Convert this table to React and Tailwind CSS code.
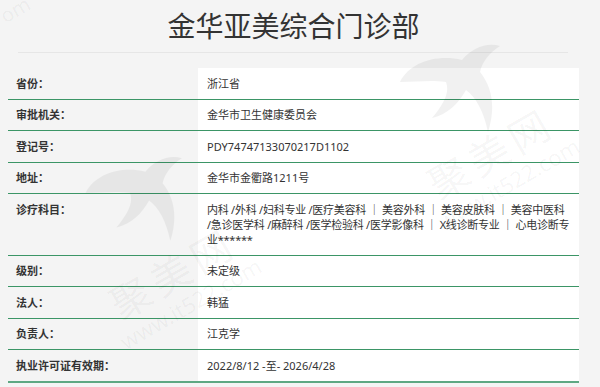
import React from 'react';

const FONT = "font-['Noto_Sans','Noto_Sans_CJK_SC',sans-serif]";

const rows = [
  { label: '省份：', value: ['浙江省'] },
  { label: '审批机关：', value: ['金华市卫生健康委员会'] },
  { label: '登记号：', value: ['PDY74747133070217D1102'] },
  { label: '地址：', value: ['金华市金衢路1211号'] },
  {
    label: '诊疗科目：',
    tight: true,
    value: [
      '内科 /外科 /妇科专业 /医疗美容科 ｜ 美容外科 ｜ 美容皮肤科 ｜ 美容中医科',
      '/急诊医学科 /麻醉科 /医学检验科 /医学影像科 ｜ X线诊断专业 ｜ 心电诊断专',
      '业******',
    ],
  },
  { label: '级别：', value: ['未定级'] },
  { label: '法人：', value: ['韩猛'] },
  { label: '负责人：', value: ['江克学'] },
  { label: '执业许可证有效期：', value: ['2022/8/12 -至- 2026/4/28'] },
];

const Tooth = ({ className }) => (
  <svg viewBox="0 0 130 95" className={className} fill="#000">
    <path d="M8 40 C18 20 45 12 70 18 C80 6 95 0 108 4 C98 10 90 20 88 30 C100 45 104 65 96 90 C92 70 84 55 74 48 C66 62 56 72 40 76 C52 62 58 50 54 40 C40 38 22 40 8 40 Z" />
  </svg>
);

const Watermark = ({ className }) => (
  <div className={`absolute flex flex-col items-center -rotate-[30deg] text-black/[0.045] pointer-events-none ${className}`}>
    <span className="text-[40px] leading-[44px] tracking-[6px]">聚美网</span>
    <span className="text-[22px] leading-[24px]">www.it522.com</span>
  </div>
);

export default function App() {
  return (
    <div className={`relative w-full h-[387px] overflow-hidden bg-[#f4f4f4] text-[#333] ${FONT}`}>
      <div className="pl-[8px] pr-[21px]">
        <div className="h-[52px] flex items-center justify-center">
          <h1 className="text-[28px] leading-none font-normal text-[#333]">金华亚美综合门诊部</h1>
        </div>
        <div className="ml-[10px] mr-[11px] h-px bg-[#e6e6e6]" />
        <div className="mt-[15px]">
          {rows.map((row, i) => (
            <div
              key={row.label}
              className={`flex text-[11px] leading-[15px] ${
                i === rows.length - 1 ? 'border-b-2 border-[#5ea883]' : 'border-b border-[#3b9566]'
              }`}
            >
              <div className="w-[190px] shrink-0 py-[7.75px] pl-[8px] font-bold">{row.label}</div>
              <div
                className={`flex-1 bg-white py-[7.75px] pl-[9px] pr-[6px] ${
                  row.tight ? 'tracking-[-0.25px]' : ''
                }`}
              >
                {row.value.map((line) => (
                  <div key={line} className="whitespace-nowrap">
                    {line}
                  </div>
                ))}
              </div>
            </div>
          ))}
        </div>
      </div>

      <Tooth className="absolute left-[392px] top-[42px] w-[130px] h-[95px] opacity-[0.05] pointer-events-none" />
      <Tooth className="absolute left-[78px] top-[140px] w-[125px] h-[120px] opacity-[0.05] pointer-events-none" />
      <Watermark className="left-[418px] top-[130px]" />
      <Watermark className="left-[100px] top-[250px]" />
      <div className="absolute left-0 top-0 -rotate-[30deg] text-[20px] leading-none text-black/[0.05] pointer-events-none">om</div>
    </div>
  );
}
